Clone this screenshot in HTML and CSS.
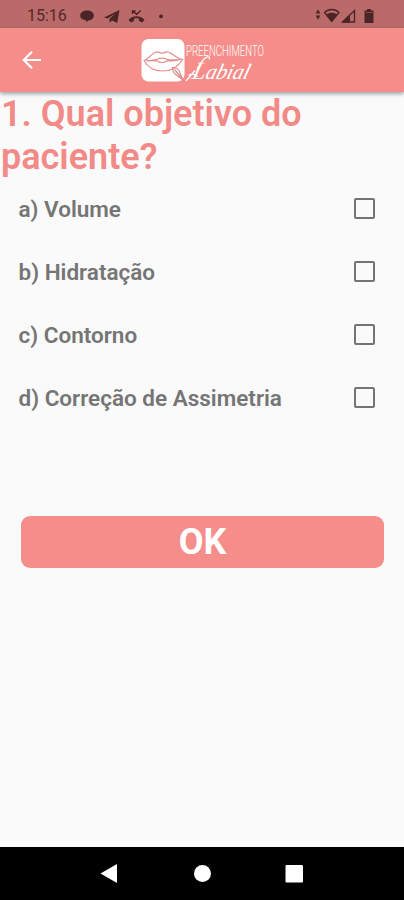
FILE: index.html
```html
<!DOCTYPE html>
<html lang="pt-BR">
<head>
  <meta charset="UTF-8">
  <meta name="viewport" content="width=device-width, initial-scale=1.0">
  <title>Preenchimento Labial</title>
  <link rel="stylesheet" href="styles.css">
</head>
<body>
  <div class="status-bar">
    <span class="time">15:16</span>
    <svg class="notifications" width="88" height="28" viewBox="78 0 88 28">
      <path d="M87 10.500c4 0 6.800 2 6.800 5s-2.600 4.600-5 4.800l-2.600 2v-2c-3.600-.4-6-2-6-4.800s2.800-5 6.800-5z"/>
      <path d="M104 17.500L119.500 10l-2.300 13-5-2.500-2.700 2v-3.700l5.500-5-7.500 4.700z"/>
      <path d="M128.500 20c4-5 12-5 16 0l-2.600 2.600-3-1.800v-2.300c-1.500-.5-3.300-.5-4.800 0v2.300l-3 1.800z"/>
      <path class="line" d="M132.500 14v-3h3M133 11.300l3.700 3 4-3.800"/>
      <circle cx="161" cy="16.300" r="1.900"/>
    </svg>
    <svg class="system" width="64" height="28" viewBox="312 0 64 28">
      <path d="M318 9.200l2.300 4.200h-4.600zM318 19.800l2.300-4.400h-4.600z"/>
      <path class="line" d="M324.500 12.500c4-4 10.500-4 14.500 0L331.700 21.500z"/>
      <path d="M326 14.500c3.500-2.300 8-2.300 11.500 0l-5.800 7.300z"/>
      <path class="line" d="M342.500 22h12V10.500z"/>
      <path d="M341.500 22.600h8.500V14z"/>
      <path d="M367 9h4v1.500h2.500V23h-9V10.500h2.500z"/>
      <path class="level" d="M365.500 12.500h7"/>
    </svg>
  </div>

  <header class="app-bar">
    <a href="#" class="back" aria-label="Voltar">
      <svg width="24" height="24" viewBox="0 0 24 24">
        <path d="M21 12H4.500M12 3.800L3.800 12l8.200 8.200"/>
      </svg>
    </a>
    <svg class="logo" width="136" height="60" viewBox="140 30 136 60">
      <rect x="141.500" y="39" width="43" height="42.500" rx="7"/>
      <g class="lips">
        <path d="M144 60.500c5-1.500 8-7.500 12-8.500 2.300-.5 4.500 1.200 6 1.200s3.700-1.700 6-1.200c4 1 9 6.500 14.500 7.500-4 7-10 11.500-20 11.500s-15-4-18.500-10.500z"/>
        <path d="M146 60.500c5 .5 8-1 11-.8 2-2.200 8-2.200 10 0 4 0 9 .8 13-.2-5 1.500-9 1.500-13 1.500-3 1.800-7 1.800-10 0z"/>
        <path d="M172.500 67.500c4 0 6.500 2 7.500 5.500l3 7-6.500-5c-3-1.500-4-4-4-7.500zM174.500 69.500l7.500 9"/>
      </g>
      <text class="brand" x="186" y="56" textLength="78" lengthAdjust="spacingAndGlyphs">PREENCHIMENTO</text>
      <path class="swash" d="M209 59.500c2-3.500-2-3.500-5-.5-3 3-5 7-7 10M198 76.500c-4-3-8-3-9.500-1M195 70.500l-9 10.500"/>
      <text class="script" transform="translate(191 79) skewX(-16)" textLength="57" lengthAdjust="spacingAndGlyphs"><tspan class="capital">L</tspan>abial</text>
    </svg>
  </header>

  <main>
    <h1>1. Qual objetivo do paciente?</h1>
    <div class="options">
      <label class="option"><span>a) Volume</span><input type="checkbox"></label>
      <label class="option"><span>b) Hidratação</span><input type="checkbox"></label>
      <label class="option"><span>c) Contorno</span><input type="checkbox"></label>
      <label class="option"><span>d) Correção de Assimetria</span><input type="checkbox"></label>
    </div>
    <button class="btn-ok" type="button">OK</button>
  </main>

  <nav class="nav-bar">
    <svg width="404" height="53" viewBox="0 0 404 53">
      <path d="M100.500 26.500L117 17v19z"/>
      <circle cx="202.500" cy="26.500" r="8.500"/>
      <rect x="285.500" y="18" width="17.500" height="17.500" rx="1"/>
    </svg>
  </nav>
</body>
</html>
```
FILE: styles.css
```css
* {
  box-sizing: border-box;
}

body {
  margin: 0;
  height: 900px;
  display: flex;
  flex-direction: column;
  background-color: #fafafa;
  font-family: Roboto, sans-serif;
  overflow: hidden;
}

/* Status bar */
.status-bar {
  display: flex;
  align-items: center;
  height: 28px;
  padding: 0 28px 0 27px;
  background-color: #b96a69;
  color: #54282a;
}

.time {
  width: 51px;
  padding-top: 4px;
  font-size: 16px;
  line-height: 20px;
}

.status-bar svg {
  fill: #4b2425;
}

.status-bar .line {
  fill: none;
  stroke: #4b2425;
  stroke-width: 1.3;
}

.status-bar .level {
  stroke: #85494a;
  stroke-width: 1;
}

.system {
  margin-left: auto;
}

/* App bar */
.app-bar {
  display: flex;
  align-items: center;
  height: 64px;
  padding-left: 20px;
  background-color: #f58e8a;
  box-shadow: 0 2px 4px rgba(0, 0, 0, 0.35);
}

.back {
  display: flex;
  width: 120px;
}

.back path {
  fill: none;
  stroke: #fff;
  stroke-width: 2.2;
}

.logo {
  overflow: visible;
}

.logo rect,
.logo text {
  fill: #fff;
}

.lips {
  fill: none;
  stroke: #e58c8b;
  stroke-width: 1.2;
}

.brand {
  font-family: Roboto, sans-serif;
  font-size: 14px;
  font-weight: 300;
}

.script {
  font-family: "Liberation Serif", serif;
  font-size: 22px;
  font-style: italic;
}

.capital {
  font-size: 25px;
}

.swash {
  fill: none;
  stroke: #fff;
  stroke-width: 1.2;
}

/* Question */
main {
  flex: 1;
}

h1 {
  margin: 0;
  padding: 1px 0 0 1px;
  font-size: 36px;
  font-weight: 600;
  line-height: 43px;
  color: #f28b87;
}

.options {
  padding: 0 29px 0 18.500px;
}

.option {
  display: flex;
  align-items: center;
  justify-content: space-between;
  height: 63px;
  margin-top: -1px;
  margin-bottom: 1px;
  font-size: 22.500px;
  font-weight: 600;
  color: #757575;
}

.option span {
  margin-top: -2px;
}

.option input {
  appearance: none;
  width: 21px;
  height: 21px;
  margin: -3px 0 0;
  border: 2px solid #747474;
  border-radius: 2px;
}

.btn-ok {
  display: block;
  width: 363px;
  height: 52px;
  margin: 86px 0 0 21px;
  padding: 0;
  border: none;
  border-radius: 9px;
  background-color: #f58e8a;
  color: #fff;
  font-family: Roboto, sans-serif;
  font-size: 36px;
  font-weight: 700;
  line-height: 52px;
}

/* System navigation */
.nav-bar {
  height: 53px;
  background-color: #000;
}

.nav-bar svg {
  display: block;
  fill: #fff;
}
```
